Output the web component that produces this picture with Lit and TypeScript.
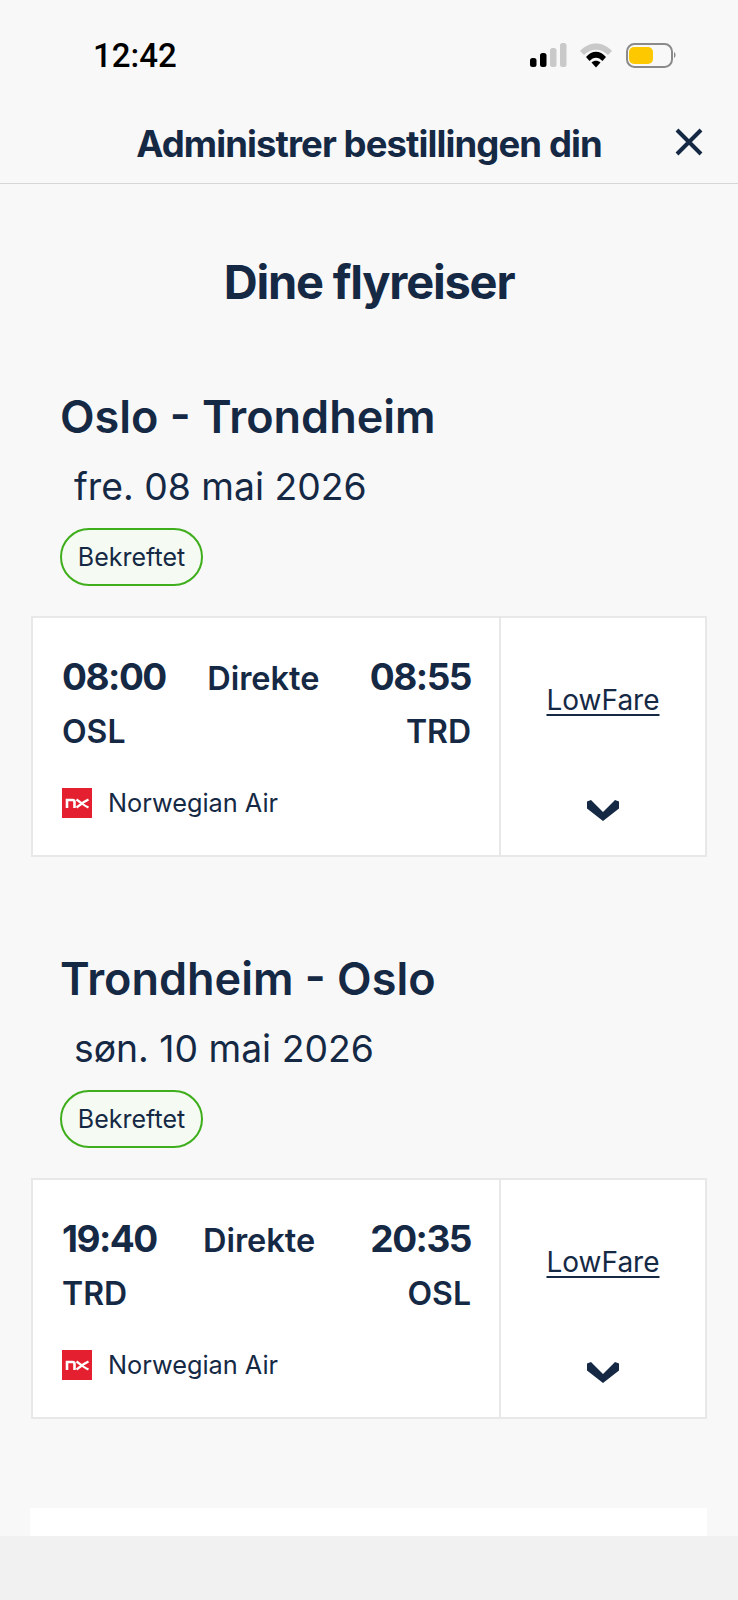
import { LitElement, css, html } from 'lit';
import { customElement } from 'lit/decorators.js';

interface Flight {
  route: string;
  date: string;
  depart: string;
  arrive: string;
  from: string;
  to: string;
}

const FLIGHTS: Flight[] = [
  { route: 'Oslo - Trondheim', date: 'fre. 08 mai 2026', depart: '08:00', arrive: '08:55', from: 'OSL', to: 'TRD' },
  { route: 'Trondheim - Oslo', date: 'søn. 10 mai 2026', depart: '19:40', arrive: '20:35', from: 'TRD', to: 'OSL' },
];

@customElement('app-root')
export class AppRoot extends LitElement {
  static styles = css`
    :host {
      display: block;
      width: 738px;
      height: 1600px;
      overflow: hidden;
      background: #f8f8f8;
      color: #152945;
      font-family: Inter, 'Noto Sans', sans-serif;
    }
    .page {
      height: 1536px;
      overflow: hidden;
    }
    .status {
      height: 110px;
      box-sizing: border-box;
      padding: 38px 62px 0 93px;
      display: flex;
      justify-content: space-between;
      align-items: flex-start;
    }
    .clock {
      font-family: Roboto, sans-serif;
      font-size: 33px;
      line-height: 36px;
      font-weight: 500;
      color: #000;
    }
    .status-icons {
      display: block;
      margin-top: 3px;
    }
    .header {
      height: 74px;
      box-sizing: border-box;
      border-bottom: 1px solid #d6d6d6;
      display: flex;
      align-items: center;
      justify-content: center;
      position: relative;
      padding-bottom: 5px;
    }
    .header h1 {
      margin: 0;
      font-size: 36.5px;
      font-weight: 700;
      letter-spacing: -0.9px;
    }
    .close {
      position: absolute;
      left: 674px;
      top: 17px;
      display: block;
    }
    .heading {
      margin: 68px 0 0;
      text-align: center;
      font-size: 47px;
      line-height: 60px;
      font-weight: 700;
      letter-spacing: -1.2px;
    }
    .trip {
      margin-top: 75px;
      padding: 0 31px 0 30px;
    }
    .trip + .trip {
      margin-top: 92px;
    }
    .route {
      margin: 0 0 0 30px;
      font-size: 45px;
      line-height: 60px;
      font-weight: 600;
    }
    .date {
      margin: 18px 0 0 44px;
      font-size: 37.3px;
      line-height: 44px;
      font-weight: 400;
    }
    .badge {
      margin: 19px 0 0 30px;
      width: 143px;
      height: 58px;
      box-sizing: border-box;
      border: 2px solid #3fae1c;
      border-radius: 29px;
      background: #f5faf3;
      display: flex;
      align-items: center;
      justify-content: center;
      font-size: 25px;
    }
    .card {
      margin: 30px 0 0 1px;
      height: 241px;
      box-sizing: border-box;
      border: 2px solid #e8e8e8;
      background: #fff;
      display: flex;
    }
    .details {
      width: 468px;
      box-sizing: border-box;
      border-right: 2px solid #e8e8e8;
      padding: 34px 28px 0 29px;
    }
    .times {
      display: flex;
      justify-content: space-between;
      align-items: center;
      height: 48px;
    }
    .time {
      font-size: 37px;
      font-weight: 700;
      letter-spacing: -1.5px;
    }
    .direct {
      font-size: 32.5px;
      font-weight: 600;
      padding-top: 4px;
      margin-right: 9px;
    }
    .codes {
      display: flex;
      justify-content: space-between;
      margin-top: 10px;
      font-size: 32px;
      line-height: 44px;
      font-weight: 600;
    }
    .airline {
      display: flex;
      align-items: center;
      gap: 16px;
      margin-top: 33px;
      font-size: 25.3px;
      line-height: 32px;
    }
    .airline svg {
      display: block;
    }
    .fare {
      flex: 1;
      display: flex;
      flex-direction: column;
      align-items: center;
      padding-top: 64px;
    }
    .fare a {
      color: inherit;
      font-size: 28px;
      line-height: 36px;
      text-decoration: underline;
      text-decoration-thickness: 2px;
      text-underline-offset: 4px;
    }
    .fare svg {
      display: block;
      margin-top: 82px;
    }
    .next-card {
      margin: 89px 31px 0 30px;
      height: 60px;
      background: #fff;
    }
    .footer {
      height: 64px;
      background: #f1f1f1;
    }
  `;

  private renderStatusIcons() {
    return html`
      <svg class="status-icons" width="146" height="28" viewBox="0 0 146 28">
        <rect x="0" y="17" width="6.5" height="9" rx="2.5" fill="#000" />
        <rect x="10" y="12" width="6.5" height="14" rx="2.5" fill="#000" />
        <rect x="20" y="7" width="6.5" height="19" rx="2.5" fill="#c9c9c9" />
        <rect x="30" y="2" width="6.5" height="24" rx="2.5" fill="#c9c9c9" />
        <path d="M50 10C59 0 73 0 82 10L78 14C71 7 61 7 54 14Z" fill="#c9c9c9" />
        <path d="M56 16C62 9 70 9 76 16L72.5 20C68.5 15.5 63.5 15.5 59.5 20Z" fill="#000" />
        <path d="M61.5 21.5C64 19 68 19 70.5 21.5L66 26.5Z" fill="#000" />
        <rect x="97" y="3" width="45" height="23" rx="7.5" fill="none" stroke="#8a8a8a" stroke-width="2" />
        <rect x="99" y="6" width="24" height="17" rx="5" fill="#fdc800" />
        <path d="M144 11C146 12 146 16 144 17Z" fill="#8a8a8a" />
      </svg>
    `;
  }

  private renderLogo() {
    return html`
      <svg width="30" height="30" viewBox="0 0 30 30">
        <rect width="30" height="30" fill="#e31f30" />
        <path d="M5 20V12H10.5Q12.5 12 12.5 14V20" fill="none" stroke="#fff" stroke-width="2.6" />
        <path d="M14.5 11.5L20 15.5L14.5 19.5M26.5 11.5C23.5 13 21.5 14 20 15.5C21.5 17 23.5 18 26.5 19.5" fill="none" stroke="#fff" stroke-width="2.2" />
      </svg>
    `;
  }

  private renderTrip(flight: Flight) {
    return html`
      <section class="trip">
        <h3 class="route">${flight.route}</h3>
        <div class="date">${flight.date}</div>
        <div class="badge">Bekreftet</div>
        <div class="card">
          <div class="details">
            <div class="times">
              <span class="time">${flight.depart}</span>
              <span class="direct">Direkte</span>
              <span class="time">${flight.arrive}</span>
            </div>
            <div class="codes"><span>${flight.from}</span><span>${flight.to}</span></div>
            <div class="airline">${this.renderLogo()}<span>Norwegian Air</span></div>
          </div>
          <div class="fare">
            <a href="#">LowFare</a>
            <svg width="32" height="21" viewBox="0 0 32 21">
              <path d="M0 1.5L4 0L16 12L28 0L32 1.5V8.5L16 21L0 8.5Z" fill="#152945" />
            </svg>
          </div>
        </div>
      </section>
    `;
  }

  render() {
    return html`
      <div class="page">
        <div class="status">
          <span class="clock">12:42</span>
          ${this.renderStatusIcons()}
        </div>
        <header class="header">
          <h1>Administrer bestillingen din</h1>
          <svg class="close" width="30" height="30" viewBox="0 0 30 30">
            <path d="M3 3L27 27M27 3L3 27" stroke="#152945" stroke-width="4" fill="none" />
          </svg>
        </header>
        <h2 class="heading">Dine flyreiser</h2>
        ${FLIGHTS.map((flight) => this.renderTrip(flight))}
        <div class="next-card"></div>
      </div>
      <div class="footer"></div>
    `;
  }
}
